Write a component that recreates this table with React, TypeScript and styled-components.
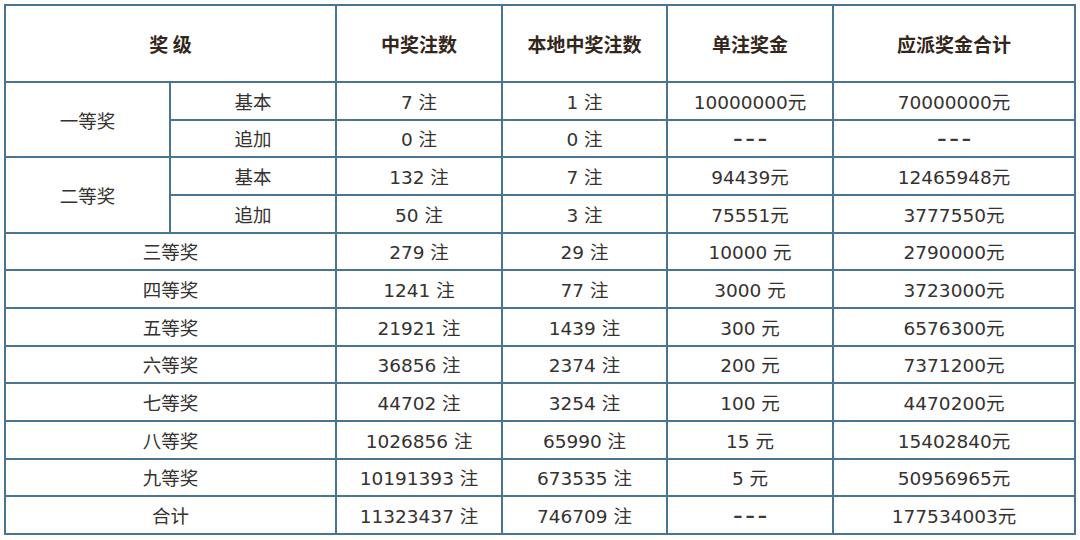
import React from 'react'
import styled, { createGlobalStyle } from 'styled-components'

const GlobalStyle = createGlobalStyle`
  html, body {
    margin: 0;
    padding: 0;
    background: #ffffff;
  }
  body {
    font-family: "DejaVu Sans", "Noto Sans CJK SC", sans-serif;
  }
`

type Row = {
  level: string
  sub?: string
  span?: number
  count: string
  local: string
  single: string
  total: string
}

const rows: Row[] = [
  { level: '一等奖', sub: '基本', span: 2, count: '7 注', local: '1 注', single: '10000000元', total: '70000000元' },
  { level: '', sub: '追加', count: '0 注', local: '0 注', single: '---', total: '---' },
  { level: '二等奖', sub: '基本', span: 2, count: '132 注', local: '7 注', single: '94439元', total: '12465948元' },
  { level: '', sub: '追加', count: '50 注', local: '3 注', single: '75551元', total: '3777550元' },
  { level: '三等奖', count: '279 注', local: '29 注', single: '10000 元', total: '2790000元' },
  { level: '四等奖', count: '1241 注', local: '77 注', single: '3000 元', total: '3723000元' },
  { level: '五等奖', count: '21921 注', local: '1439 注', single: '300 元', total: '6576300元' },
  { level: '六等奖', count: '36856 注', local: '2374 注', single: '200 元', total: '7371200元' },
  { level: '七等奖', count: '44702 注', local: '3254 注', single: '100 元', total: '4470200元' },
  { level: '八等奖', count: '1026856 注', local: '65990 注', single: '15 元', total: '15402840元' },
  { level: '九等奖', count: '10191393 注', local: '673535 注', single: '5 元', total: '50956965元' },
  { level: '合计', count: '11323437 注', local: '746709 注', single: '---', total: '177534003元' },
]

const Page = styled.div`
  padding: 4px 0 0 4px;
`

const Table = styled.table`
  width: 1070px;
  table-layout: fixed;
  border-collapse: collapse;
  border: 2px solid #4a7590;
  color: #353230;
  font-size: 18.5px;
`

const HeadRow = styled.tr`
  height: 77px;
`

const BodyRow = styled.tr`
  height: 37.67px;
`

const Th = styled.th`
  border: 2px solid #4a7590;
  font-family: "Noto Sans CJK SC", sans-serif;
  font-size: 19px;
  font-weight: 700;
  color: #33261a;
  text-align: center;
  vertical-align: middle;
  padding: 0;
`

const Td = styled.td`
  border: 2px solid #4a7590;
  text-align: center;
  vertical-align: middle;
  padding: 0;
  white-space: nowrap;
`

const Dash = styled.span`
  letter-spacing: 3px;
  margin-right: -3px;
  color: #3a3a3a;
  font-weight: 700;
`

const cell = (v: string) => (v === '---' ? <Dash>–––</Dash> : v)

const App = () => (
  <Page>
    <GlobalStyle />
    <Table>
      <colgroup>
        <col style={{ width: 165 }} />
        <col style={{ width: 166 }} />
        <col style={{ width: 166 }} />
        <col style={{ width: 165 }} />
        <col style={{ width: 166 }} />
        <col style={{ width: 242 }} />
      </colgroup>
      <thead>
        <HeadRow>
          <Th colSpan={2}>奖&nbsp;级</Th>
          <Th>中奖注数</Th>
          <Th>本地中奖注数</Th>
          <Th>单注奖金</Th>
          <Th>应派奖金合计</Th>
        </HeadRow>
      </thead>
      <tbody>
        {rows.map((r, i) => (
          <BodyRow key={i}>
            {r.sub ? (
              <>
                {r.level && <Td rowSpan={r.span}>{r.level}</Td>}
                <Td>{r.sub}</Td>
              </>
            ) : (
              <Td colSpan={2}>{r.level}</Td>
            )}
            <Td>{r.count}</Td>
            <Td>{r.local}</Td>
            <Td>{cell(r.single)}</Td>
            <Td>{cell(r.total)}</Td>
          </BodyRow>
        ))}
      </tbody>
    </Table>
  </Page>
)

export default App
